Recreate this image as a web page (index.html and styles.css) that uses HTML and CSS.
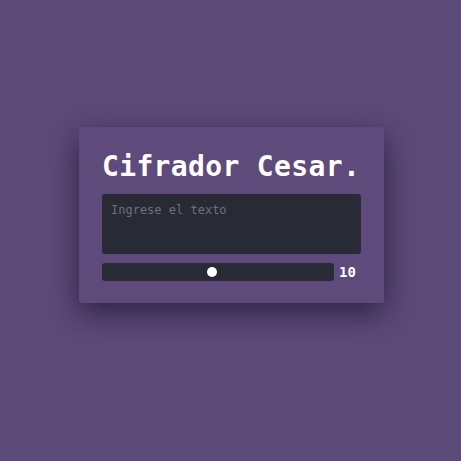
FILE: index.html
```html
<!DOCTYPE html>
<html lang="es">
<head>
<meta charset="utf-8">
<title>Cifrador Cesar</title>
<link rel="stylesheet" href="styles.css">
</head>
<body>
<main class="card">
  <h1 class="title">Cifrador Cesar.</h1>
  <textarea class="input" placeholder="Ingrese el texto"></textarea>
  <div class="shift-row">
    <input class="slider" type="range" min="1" max="20" value="10">
    <span class="shift-value">10</span>
  </div>
</main>
</body>
</html>
```
FILE: styles.css
```css
html, body {
  margin: 0;
  padding: 0;
}
body {
  background: #5c4a78;
  min-height: 100vh;
  display: flex;
  flex-direction: column;
  align-items: center;
  padding-top: 127px;
  box-sizing: border-box;
  font-family: "DejaVu Sans Mono", "Liberation Mono", monospace;
}
.card {
  width: 305px;
  margin-left: 2px;
  box-sizing: border-box;
  padding: 23px 23px 22px 23px;
  background: #5e4b7c;
  border-radius: 3px;
  box-shadow: 0 10px 30px rgba(20, 10, 40, 0.65);
  display: flex;
  flex-direction: column;
}
.title {
  margin: 0 0 10px 0;
  font-size: 28px;
  line-height: 34px;
  font-weight: bold;
  color: #ffffff;
  letter-spacing: 0.35px;
  white-space: nowrap;
}
.input {
  display: block;
  width: 100%;
  height: 60px;
  box-sizing: border-box;
  margin: 0;
  padding: 9px 9px;
  border: none;
  border-radius: 3px;
  background: #282a36;
  color: #f8f8f2;
  font-family: "DejaVu Sans Mono", "Liberation Mono", monospace;
  font-size: 12px;
  line-height: 15px;
  resize: none;
  outline: none;
}
.input::placeholder {
  color: #6e707c;
}
.shift-row {
  margin-top: 9px;
  display: flex;
  align-items: center;
  gap: 5px;
}
.slider {
  -webkit-appearance: none;
  appearance: none;
  margin: 0;
  width: 232px;
  height: 18px;
  border-radius: 3px;
  background: #282a36;
  outline: none;
}
.slider::-webkit-slider-thumb {
  -webkit-appearance: none;
  appearance: none;
  width: 10px;
  height: 10px;
  border-radius: 50%;
  background: #ffffff;
  border: none;
}
.shift-value {
  color: #ffffff;
  font-size: 14px;
  font-weight: bold;
  line-height: 18px;
}
```
